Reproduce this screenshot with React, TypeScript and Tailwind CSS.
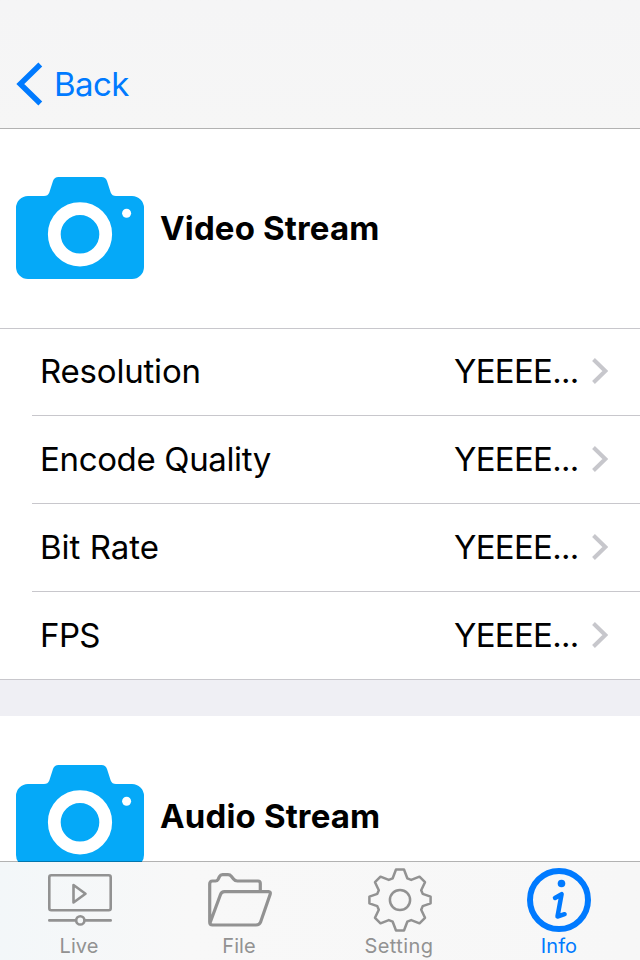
import React from "react";

function CameraIcon() {
  return (
    <svg width="128" height="102" viewBox="0 0 128 102" className="block shrink-0">
      <path
        d="M12 19H28Q32 19 33.3 15.5L37 4Q38.4 0 42.5 0H85.5Q89.600 0 91 4L94.700 15.500Q96 19 100 19H116A12 12 0 0 1 128 31V90A12 12 0 0 1 116 102H12A12 12 0 0 1 0 90V31A12 12 0 0 1 12 19Z"
        fill="#05a9f8"
      />
      <circle cx="64" cy="57.300" r="25.700" fill="none" stroke="#fff" strokeWidth="12.800" />
      <circle cx="110.600" cy="36.300" r="4.500" fill="#fff" />
    </svg>
  );
}

function SectionHeader({ title }: { title: string }) {
  return (
    <div className="flex h-[200px] items-start border-b border-[#c8c7cc] bg-white pl-4">
      <div className="pt-12">
        <CameraIcon />
      </div>
      <h2 className="ml-4 mt-[79px] whitespace-nowrap text-[33px] font-bold leading-[40px] tracking-[0.15px]">
        {title}
      </h2>
    </div>
  );
}

const rows = [
  { label: "Resolution", spacing: "tracking-[-0.2px]" },
  { label: "Encode Quality", spacing: "tracking-[-0.35px]" },
  { label: "Bit Rate", spacing: "tracking-[0px]" },
  { label: "FPS", spacing: "tracking-[-0.6px]" },
];

function Row({ label, spacing, first, last }: { label: string; spacing: string; first: boolean; last: boolean }) {
  return (
    <div className={last ? "border-b border-[#c8c7cc]" : "pl-8"}>
      <div
        className={
          last
            ? "flex h-[87px] items-center pb-0.5 pl-10 pr-8"
            : first
              ? "flex h-[87px] items-center border-b border-[#c8c7cc] pb-0.5 pl-2 pr-8"
              : "flex h-[88px] items-center border-b border-[#c8c7cc] pb-0.5 pl-2 pr-8"
        }
      >
        <span className={"flex-1 text-[33px] leading-[40px] " + spacing}>{label}</span>
        <span className="mr-[13px] w-[125px] whitespace-nowrap text-[33px] leading-[40px] tracking-[-0.7px]">YEEEE...</span>
        <svg width="16" height="26" viewBox="0 0 16 26" className="block shrink-0">
          <path d="M1.500 1.500L13.300 13L1.500 24.500" fill="none" stroke="#c7c7cc" strokeWidth="4" />
        </svg>
      </div>
    </div>
  );
}

function LiveIcon() {
  return (
    <svg width="64" height="64" viewBox="0 0 64 64" fill="none" stroke="#929292" strokeWidth="2.600" strokeLinejoin="round" strokeLinecap="round">
      <rect x="1.300" y="7.300" width="61.400" height="35" rx="2" />
      <path d="M25.500 17V34.500L37.500 25.700Z" />
      <path d="M1.300 52.400H27.500M37.500 52.400H62.700" />
      <circle cx="32.300" cy="52.400" r="4.100" />
    </svg>
  );
}

function FileIcon() {
  return (
    <svg width="64" height="64" viewBox="0 0 64 64" fill="none" stroke="#929292" strokeWidth="3.200" strokeLinejoin="round" strokeLinecap="round">
      <path d="M52.300 22V15.500Q52.300 13 50 13H29.500Q27 13 25.500 11L23.500 8.500Q22 6.700 20 6.700H14.500Q12.500 6.700 11.500 8.500L10 11.500Q9.200 13 7.500 13H4.500Q1.700 13 1.700 16V54Q1.700 57 4.500 57H48Q51.500 57 52.600 54L62.100 26.500Q63 23.700 60.500 23.700H16.500Q13.500 23.700 12.500 26.500L2 55V47" />
    </svg>
  );
}

function GearIcon() {
  return (
    <svg width="64" height="64" viewBox="0 0 64 64" fill="none" stroke="#929292" strokeWidth="2.500" strokeLinejoin="round">
      <path d="M28 1.500H36L39.300 10.300L43.200 11.900L51.500 8.700L57 14.200L53.200 22.300L54.700 25.800L62.600 28.700V35.300L54.700 38.200L53.200 41.700L57 49.800L51.500 55.300L43.200 52.100L39.300 53.700L36 62.500H28L24.700 53.700L20.800 52.100L12.500 55.300L7 49.800L10.800 41.700L9.300 38.200L1.400 35.300V28.700L9.300 25.800L10.800 22.300L7 14.200L12.500 8.700L20.800 11.900L24.700 10.300Z" />
      <circle cx="32" cy="32" r="10.100" />
    </svg>
  );
}

function InfoIcon() {
  return (
    <svg width="64" height="64" viewBox="0 0 64 64" fill="none" stroke="#007aff" strokeLinecap="round" strokeLinejoin="round" className="mr-0.5">
      <circle cx="32" cy="32" r="29" strokeWidth="6" />
      <circle cx="34.500" cy="15.500" r="3.800" fill="#007aff" stroke="none" />
      <path d="M28 30L34.600 26.200L30.500 48.500L37.600 46.200" strokeWidth="4.500" />
    </svg>
  );
}

const tabs = [
  { label: "Live", icon: <LiveIcon />, style: "tracking-[0.1px] text-[#929292]" },
  { label: "File", icon: <FileIcon />, style: "tracking-[0.1px] text-[#929292]" },
  { label: "Setting", icon: <GearIcon />, style: "tracking-[0.4px] text-[#929292]" },
  { label: "Info", icon: <InfoIcon />, style: "tracking-[0.1px] text-[#007aff]" },
];

export default function App() {
  return (
    <div className="flex h-[960px] w-[640px] flex-col overflow-hidden bg-white font-['Inter','Liberation_Sans',sans-serif] text-black">
      <header className="flex h-[129px] shrink-0 items-start border-b border-[#b2b2b2] bg-gradient-to-b from-[#f5f5f6] to-[#f6f6f6] text-[#007aff]">
        <button className="flex items-center pl-4 pt-[62px]">
          <svg width="27" height="44" viewBox="0 0 27 44" className="block">
            <path d="M24.300 2.500L4.300 22L24.300 41.500" fill="none" stroke="#007aff" strokeWidth="5.500" />
          </svg>
          <span className="ml-[11px] text-[33px] leading-[40px] tracking-[-0.6px]">Back</span>
        </button>
      </header>

      <main className="h-[733px] shrink-0 overflow-hidden">
        <SectionHeader title="Video Stream" />
        {rows.map((row, i) => (
          <Row key={row.label} {...row} first={i === 0} last={i === rows.length - 1} />
        ))}
        <div className="h-9 bg-[#efeff4]" />
        <div className="bg-white pt-px">
          <SectionHeader title="Audio Stream" />
        </div>
      </main>

      <nav className="relative -mt-px grid h-[99px] shrink-0 grid-cols-4 border-t border-black/30 bg-gradient-to-r from-[#f3f7f9] via-[#f8f8f8] via-30% to-[#f7f7f7] bg-clip-padding">
        {tabs.map((tab) => (
          <div key={tab.label} className="flex flex-col items-center pt-1.5">
            {tab.icon}
            <span className={"mr-0.5 mt-0.5 text-[20px] leading-[24px] " + tab.style}>{tab.label}</span>
          </div>
        ))}
      </nav>
    </div>
  );
}
